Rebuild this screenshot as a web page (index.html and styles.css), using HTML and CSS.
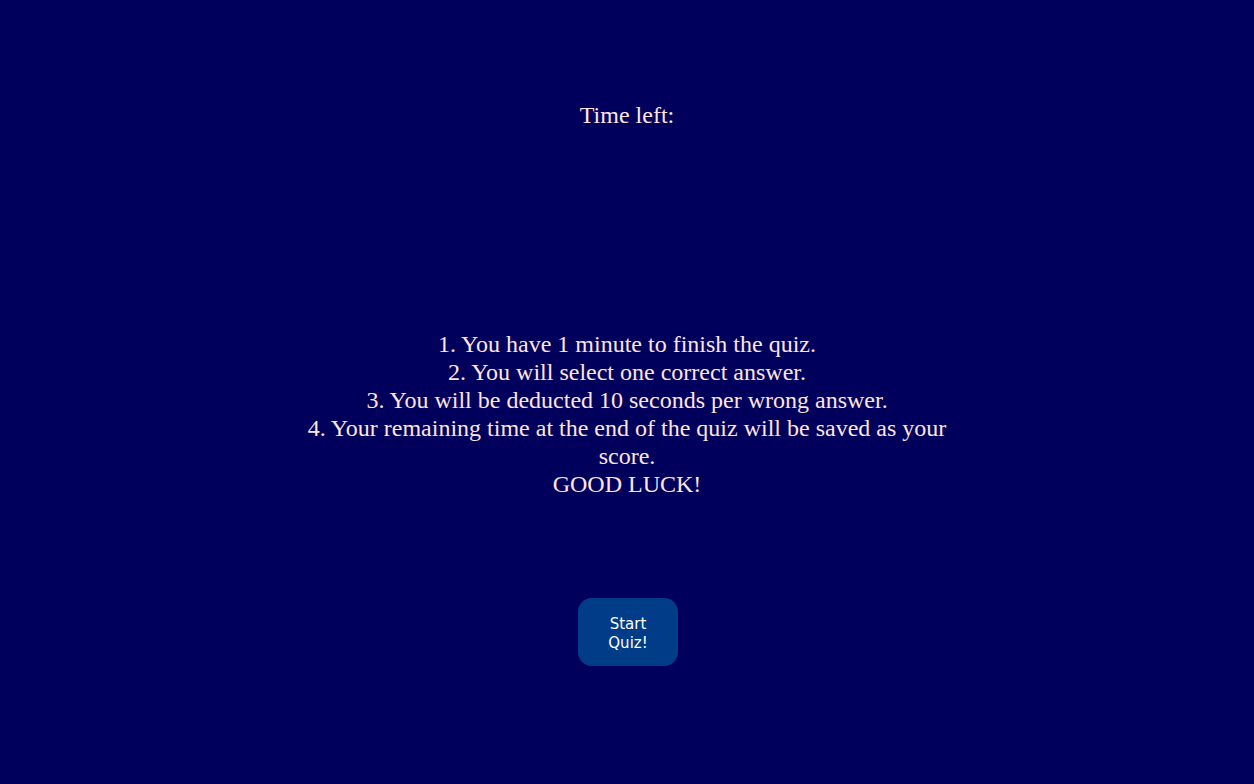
FILE: index.html
```html
<!DOCTYPE html>
<html>
<head>
<meta charset="utf-8">
<link rel="stylesheet" href="styles.css">
</head>
<body>
<main class="page">
  <header class="timer">Time left: <span class="time"></span></header>
  <section class="rules">
    <p>1. You have 1 minute to finish the quiz.<br>
    2. You will select one correct answer.<br>
    3. You will be deducted 10 seconds per wrong answer.<br>
    4. Your remaining time at the end of the quiz will be saved as your score.<br>
    GOOD LUCK!</p>
  </section>
  <div class="actions">
    <button class="start-btn">Start Quiz!</button>
  </div>
</main>
</body>
</html>
```
FILE: styles.css
```css
html, body {
  margin: 0;
  padding: 0;
  background: #00005c;
  height: 100%;
}
.page {
  display: flex;
  flex-direction: column;
  align-items: center;
  font-family: "Liberation Serif", "Times New Roman", serif;
  color: #ffe4e1;
  font-size: 24px;
}
.timer {
  margin-top: 102px;
  text-align: center;
}
.rules {
  margin-top: 201px;
  width: 660px;
  text-align: center;
}
.rules p {
  margin: 0;
  line-height: 28px;
}
.actions {
  margin-top: 100px;
  padding-left: 2px;
}
.start-btn {
  width: 100px;
  height: 68px;
  border: none;
  border-radius: 14px;
  background: #003c87;
  color: #ffffff;
  font-family: "DejaVu Sans", Verdana, sans-serif;
  font-size: 15px;
  padding: 4px 24px 0;
  line-height: 19px;
}
```
